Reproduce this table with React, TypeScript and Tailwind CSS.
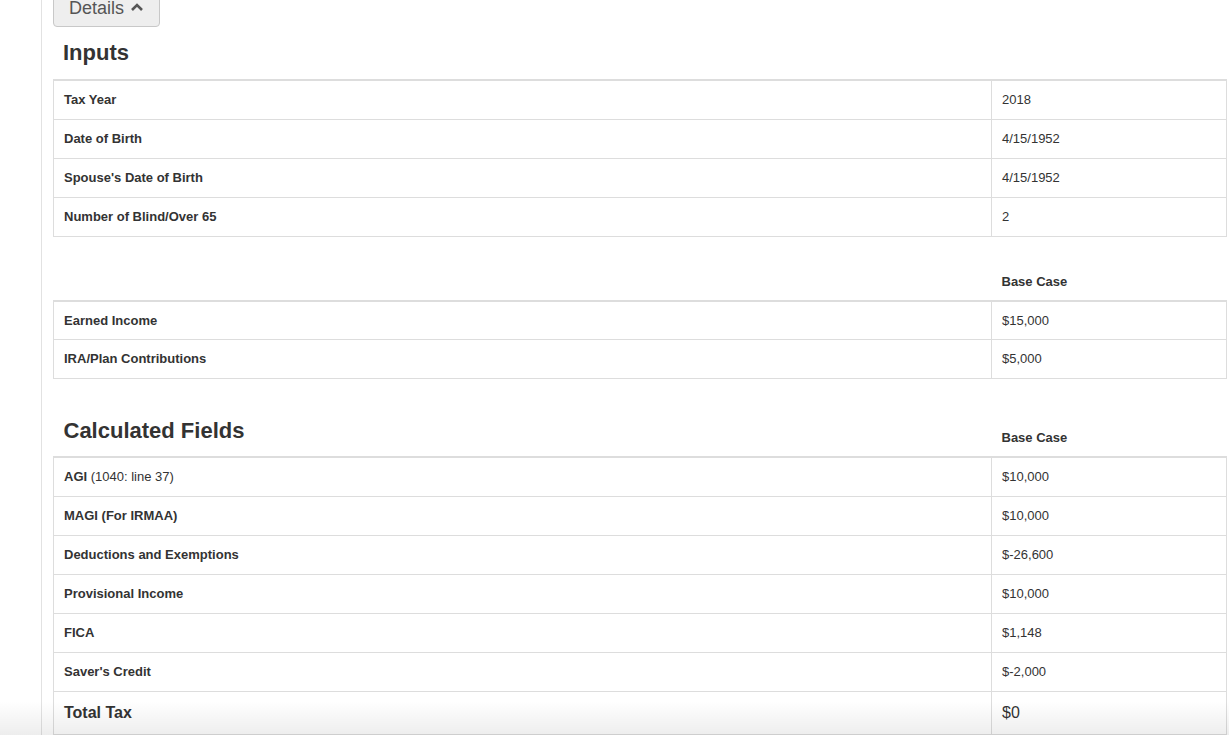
import React from "react";

interface Row {
  label: React.ReactNode;
  value: string;
}

const inputs: Row[] = [
  { label: "Tax Year", value: "2018" },
  { label: "Date of Birth", value: "4/15/1952" },
  { label: "Spouse's Date of Birth", value: "4/15/1952" },
  { label: "Number of Blind/Over 65", value: "2" },
];

const income: Row[] = [
  { label: "Earned Income", value: "$15,000" },
  { label: "IRA/Plan Contributions", value: "$5,000" },
];

const calculated: Row[] = [
  {
    label: (
      <>
        AGI <span className="font-normal">(1040: line 37)</span>
      </>
    ),
    value: "$10,000",
  },
  { label: "MAGI (For IRMAA)", value: "$10,000" },
  { label: "Deductions and Exemptions", value: "$-26,600" },
  { label: "Provisional Income", value: "$10,000" },
  { label: "FICA", value: "$1,148" },
  { label: "Saver's Credit", value: "$-2,000" },
];

const BodyRows = ({ rows }: { rows: Row[] }) => (
  <>
    {rows.map((row, i) => (
      <tr key={i} className="h-[39px]">
        <td className="border border-[#ddd] pl-[10px] text-[13px] font-bold text-[#333]">
          {row.label}
        </td>
        <td className="border border-[#ddd] pl-[10px] text-[13px] text-[#333]">
          {row.value}
        </td>
      </tr>
    ))}
  </>
);

const Cols = () => (
  <colgroup>
    <col className="w-[938px]" />
    <col />
  </colgroup>
);

export default function App() {
  return (
    <div
      className="relative flex min-h-[735px] bg-white text-[#333]"
      style={{ fontFamily: '"Liberation Sans", Arial, sans-serif' }}
    >
      {/* left gutter */}
      <div className="w-[42px] shrink-0 border-r border-[#e2e2e2]" />

      <div className="flex-1 pl-[11px] pr-[2px]">
        {/* Details toggle */}
        <button className="-mt-[11px] flex h-[38px] w-[107px] items-center justify-center gap-[6px] rounded-b-[4px] border border-[#c8c8c8] bg-[#eee] text-[18px] leading-none text-[#555]">
          Details
          <svg width="14" height="10" viewBox="0 0 14 10" className="mt-[-2px]">
            <path d="M2 8 L7 3 L12 8" fill="none" stroke="#555" strokeWidth="2.6" />
          </svg>
        </button>

        <h3 className="mt-[14px] mb-[14px] pl-[10px] text-[22px] leading-[24px] font-bold">
          Inputs
        </h3>

        <table className="w-[1174px] table-fixed border-collapse border-t-2 border-t-[#ddd]">
          <Cols />
          <tbody>
            <BodyRows rows={inputs} />
          </tbody>
        </table>

        <table className="mt-[19px] w-[1174px] table-fixed border-collapse">
          <Cols />
          <thead>
            <tr className="h-[45px] border-b-2 border-[#ddd]">
              <th />
              <th className="pb-[8px] pl-[10px] text-left align-bottom text-[13px] leading-[20px] font-bold">
                Base Case
              </th>
            </tr>
          </thead>
          <tbody>
            <BodyRows rows={income} />
          </tbody>
        </table>

        <table className="mt-[20px] w-[1174px] table-fixed border-collapse">
          <Cols />
          <thead>
            <tr className="h-[58px] border-b-2 border-[#ddd]">
              <th className="pb-[13px] pl-[10px] text-left align-bottom text-[22px] leading-[24px] font-bold">
                Calculated Fields
              </th>
              <th className="pb-[8px] pl-[10px] text-left align-bottom text-[13px] leading-[20px] font-bold">
                Base Case
              </th>
            </tr>
          </thead>
          <tbody>
            <BodyRows rows={calculated} />
            <tr className="h-[43px]">
              <td className="border border-[#ddd] pl-[10px] text-[16px] font-bold">Total Tax</td>
              <td className="border border-[#ddd] pl-[10px] text-[16px]">$0</td>
            </tr>
          </tbody>
        </table>
      </div>

      {/* bottom fade */}
      <div className="pointer-events-none absolute inset-x-0 bottom-0 h-[34px] bg-linear-to-b from-transparent to-black/[0.07]" />
    </div>
  );
}
